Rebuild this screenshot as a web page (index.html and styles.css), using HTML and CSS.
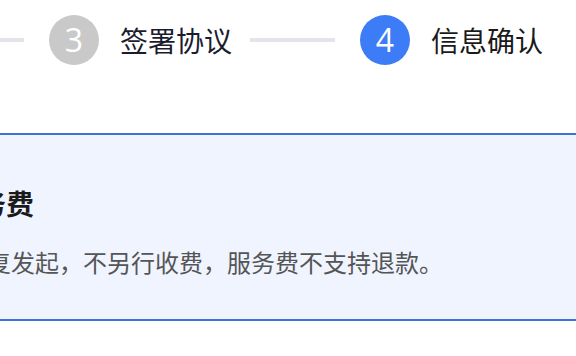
FILE: index.html
```html
<!DOCTYPE html>
<html lang="zh-CN">
<head>
<meta charset="utf-8">
<link rel="stylesheet" href="styles.css">
</head>
<body>
<div class="steps">
  <div class="line line-first"></div>
  <div class="step">
    <div class="dot dot-done">3</div>
    <div class="label">签署协议</div>
  </div>
  <div class="line line-mid"></div>
  <div class="step">
    <div class="dot dot-active">4</div>
    <div class="label label-active">信息确认</div>
  </div>
</div>
<div class="notice">
  <div class="notice-title">服务费</div>
  <div class="notice-text">重复发起，不另行收费，服务费不支持退款。</div>
</div>
</body>
</html>
```

FILE: styles.css
```css
html, body {
  margin: 0;
  padding: 0;
  background: #ffffff;
  overflow: hidden;
  width: 576px;
  height: 356px;
  font-family: "Noto Sans CJK SC", "Noto Sans", sans-serif;
}

.steps {
  display: flex;
  align-items: center;
  height: 80px;
  margin-left: -61px;
  white-space: nowrap;
}

.line {
  flex: none;
  width: 85px;
  height: 4px;
  background: #e2e4e9;
}

.line-first {
  margin-right: 25px;
}

.line-mid {
  margin-left: 18px;
  margin-right: 25px;
}

.step {
  display: flex;
  align-items: center;
  flex: none;
}

.dot {
  width: 50px;
  height: 50px;
  border-radius: 50%;
  display: flex;
  align-items: center;
  justify-content: center;
  color: #ffffff;
  font-family: "Open Sans", "Noto Sans", sans-serif;
  font-size: 32px;
  line-height: 1;
}

.dot-done {
  background: #c9c9c9;
}

.dot-active {
  background: #3c7cf6;
}

.label {
  margin-left: 21px;
  font-size: 28px;
  line-height: 40px;
  color: #1b1d2e;
}

.label-active {
  color: #1a1a1a;
}

.notice {
  margin-top: 53px;
  margin-left: -80px;
  width: 760px;
  height: 188px;
  box-sizing: border-box;
  background: #eff4ff;
  border-top: 2px solid #3b73d8;
  border-bottom: 2px solid #3b73d8;
  padding: 48px 0 0 30px;
  white-space: nowrap;
}

.notice-title {
  font-size: 28px;
  line-height: 40px;
  font-weight: bold;
  color: #1a1a1a;
}

.notice-text {
  margin-top: 21px;
  margin-left: 13px;
  font-size: 24px;
  line-height: 36px;
  color: #555555;
}
```
